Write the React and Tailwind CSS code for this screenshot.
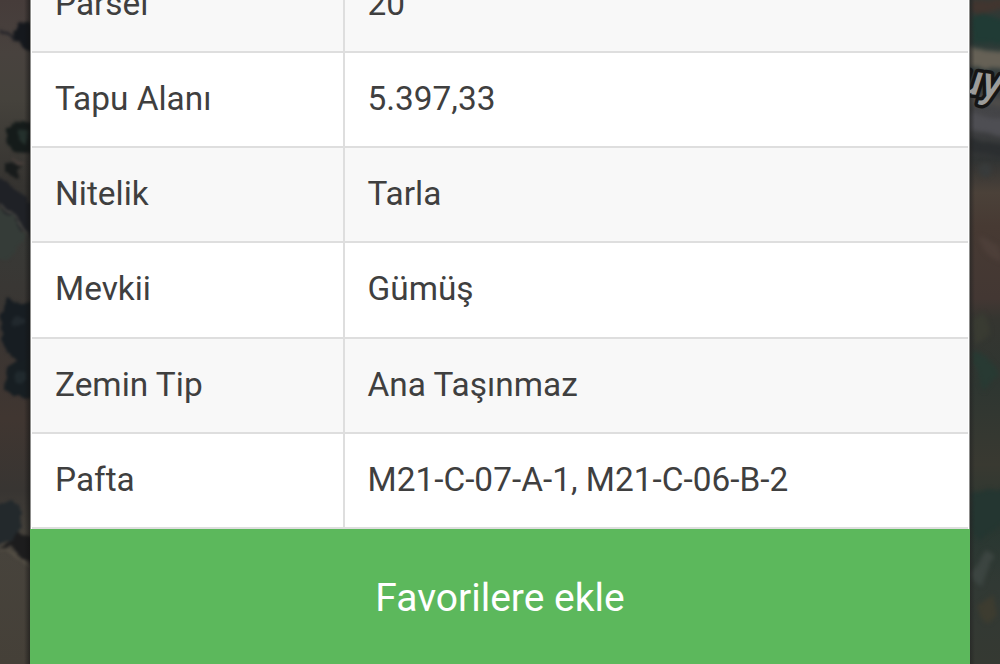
const rows = [
    { label: 'Parsel', value: '20' },
    { label: 'Tapu Alanı', value: '5.397,33' },
    { label: 'Nitelik', value: 'Tarla' },
    { label: 'Mevkii', value: 'Gümüş' },
    { label: 'Zemin Tip', value: 'Ana Taşınmaz' },
    { label: 'Pafta', value: 'M21-C-07-A-1, M21-C-06-B-2' },
];

function MapLeft() {
    return (
        <svg className="block w-[30px] h-[664px]" viewBox="0 0 30 664">
            <defs>
                <linearGradient id="soilLeft" x1="0" y1="0" x2="0" y2="1">
                    <stop offset="0" stopColor="#463c3a" />
                    <stop offset="0.08" stopColor="#48423e" />
                    <stop offset="0.15" stopColor="#45423c" />
                    <stop offset="0.28" stopColor="#353330" />
                    <stop offset="0.36" stopColor="#383936" />
                    <stop offset="0.5" stopColor="#3a3532" />
                    <stop offset="0.63" stopColor="#403631" />
                    <stop offset="0.74" stopColor="#383532" />
                    <stop offset="0.82" stopColor="#47433c" />
                    <stop offset="1" stopColor="#454038" />
                </linearGradient>
                <filter id="softLeft" x="-50%" y="-20%" width="200%" height="140%" colorInterpolationFilters="sRGB">
                    <feTurbulence type="fractalNoise" baseFrequency="0.09" numOctaves="2" seed="4" result="n" />
                    <feDisplacementMap in="SourceGraphic" in2="n" xChannelSelector="R" yChannelSelector="G" scale="8" />
                    <feGaussianBlur stdDeviation="1.8" />
                </filter>
                <linearGradient id="edgeLeft">
                    <stop offset="0" stopColor="#111" stopOpacity="0" />
                    <stop offset="1" stopColor="#111" stopOpacity="0.55" />
                </linearGradient>
            </defs>
            <rect width="30" height="664" fill="url(#soilLeft)" />
            <g filter="url(#softLeft)">
                <path d="M0 32 L18 38 L30 50" stroke="#26252a" strokeWidth="3" fill="none" />
                <path d="M19 22 L36 24 V56 L16 40 L13 31Z" fill="#15181d" />
                <path d="M12 124 Q25 118 36 124 V154 L16 152 L6 140 L7 128Z" fill="#151b1a" />
                <path d="M19 128 L29 133 L27 145 L18 141Z" fill="#24302c" />
                <path d="M5 163 L22 165 L18 178 L5 172Z" fill="#181b1b" />
                <path d="M12 158 L22 164" stroke="#4b403c" strokeWidth="3" />
                <path d="M-5 176 L10 186 L36 207 V240 L19 228 L4 211 L-5 197Z" fill="#1f2126" />
                <path d="M-5 206 L14 218 L24 236 L20 246 L9 261 L-5 260Z" fill="#353c38" />
                <path d="M0 203 L17 219 L29 237" stroke="#4a4945" strokeWidth="2" fill="none" />
                <path d="M1 316 L7 298 L23 304 L36 299 V358 L19 362 L7 352 L2 339Z" fill="#171d22" />
                <path d="M8 366 L17 360 L36 357 V398 L14 397 L6 388Z" fill="#171e22" />
                <circle cx="18" cy="321" r="6" fill="#21282d" />
                <circle cx="20" cy="378" r="6" fill="#20292d" />
                <path d="M-5 506 L11 500 L22 512 L18 536 L-5 546Z" fill="#23292c" />
                <path d="M8 541 L18 534 L36 535 V566 L21 559 L11 546 L0 551Z" fill="#1c1c1d" />
                <path d="M0 550 L11 553 L30 568" stroke="#565046" strokeWidth="2" fill="none" />
            </g>
            <rect x="24" width="6" height="664" fill="url(#edgeLeft)" />
        </svg>
    );
}

function MapRight() {
    return (
        <svg className="block w-[30px] h-[664px] overflow-hidden" viewBox="0 0 30 664">
            <defs>
                <linearGradient id="soilRight" x1="0" y1="0" x2="0" y2="1">
                    <stop offset="0" stopColor="#343936" />
                    <stop offset="0.06" stopColor="#2b3a36" />
                    <stop offset="0.17" stopColor="#454548" />
                    <stop offset="0.24" stopColor="#303333" />
                    <stop offset="0.29" stopColor="#4b4139" />
                    <stop offset="0.34" stopColor="#473a33" />
                    <stop offset="0.45" stopColor="#433733" />
                    <stop offset="0.48" stopColor="#353530" />
                    <stop offset="0.58" stopColor="#2e3631" />
                    <stop offset="0.7" stopColor="#393931" />
                    <stop offset="0.79" stopColor="#283731" />
                    <stop offset="0.88" stopColor="#313934" />
                    <stop offset="1" stopColor="#353932" />
                </linearGradient>
                <filter id="softRight" x="-50%" y="-20%" width="200%" height="140%" colorInterpolationFilters="sRGB">
                    <feTurbulence type="fractalNoise" baseFrequency="0.09" numOctaves="2" seed="9" result="n" />
                    <feDisplacementMap in="SourceGraphic" in2="n" xChannelSelector="R" yChannelSelector="G" scale="6" />
                    <feGaussianBlur stdDeviation="2" />
                </filter>
                <linearGradient id="edgeRight">
                    <stop offset="0" stopColor="#222" stopOpacity="0.6" />
                    <stop offset="1" stopColor="#222" stopOpacity="0" />
                </linearGradient>
            </defs>
            <rect width="30" height="664" fill="url(#soilRight)" />
            <g filter="url(#softRight)">
                <path d="M0 0 H36 V8 L10 14 L0 10Z" fill="#41352f" />
                <path d="M2 18 L12 12 L36 20 V43 L2 42Z" fill="#203b35" />
                <path d="M-5 47 L36 53 V70 L-5 66Z" fill="#666156" />
                <path d="M-5 95 L36 99 V108 L-5 104Z" fill="#4d4b49" />
                <path d="M-5 112 L36 119 V136 L-5 129Z" fill="#4e4e53" />
                <path d="M-5 139 L36 145 V157 L-5 151Z" fill="#2b2e30" />
                <circle cx="15" cy="170" r="7" fill="#383b3b" />
                <path d="M9 235 L30 247 V263 L12 250Z" fill="#4d3f39" />
                <path d="M3 318 L14 312 L20 333 L5 344Z" fill="#393b32" />
                <path d="M0 351 L18 356 L29 375 L13 390Z" fill="#283a33" />
                <path d="M0 493 L36 488 V520 L10 540 L0 526Z" fill="#243631" />
                <path d="M0 575 L16 550 L24 555 L10 587Z" fill="#3c4541" />
                <path d="M7 606 L24 594 L28 616 L15 625Z" fill="#3d3c30" />
            </g>
            <rect width="5" height="664" fill="url(#edgeRight)" />
            <text
                x="-12"
                y="94"
                transform="rotate(8 0 90)"
                className="font-['Roboto'] text-[43px] font-medium italic"
                fill="#9c9c9a"
                stroke="#151515"
                strokeWidth="7"
                strokeLinejoin="round"
                paintOrder="stroke"
            >
                uy
            </text>
        </svg>
    );
}

export default function App() {
    return (
        <div className="grid grid-cols-[30px_940px_30px] w-[1000px] h-[664px] overflow-hidden bg-[#3a3733] font-['Roboto',sans-serif]">
            <MapLeft />
            <div className="flex flex-col h-[664px] overflow-hidden">
                <div className="h-[529px] shrink-0 flex flex-col justify-end overflow-hidden bg-white border-x border-[#8f8f8d]">
                    {rows.map((row, i) => (
                        <div
                            key={row.label}
                            className={`flex h-[95.2px] shrink-0 mx-px border-b-2 border-[#dedede] text-[33.4px] leading-[92px] text-[#3f3f3f] ${i % 2 === 0 ? 'bg-[#f8f8f8]' : 'bg-white'}`}
                        >
                            <div className="w-[313px] shrink-0 pl-[23px] border-r-2 border-[#dedede]">{row.label}</div>
                            <div className="pl-[22.5px] whitespace-nowrap">{row.value}</div>
                        </div>
                    ))}
                </div>
                <button type="button" className="h-[135px] w-full pt-[3px] bg-[#5cb85c] text-white text-[39px] leading-none">
                    Favorilere ekle
                </button>
            </div>
            <MapRight />
        </div>
    );
}
